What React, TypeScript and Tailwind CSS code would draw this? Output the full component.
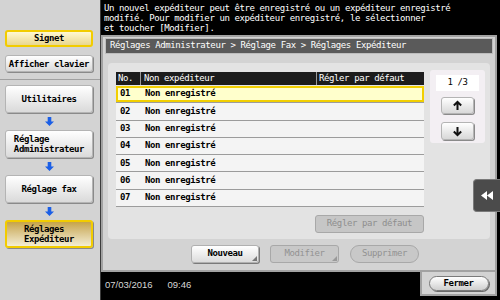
import React from 'react';

const mono = "font-['DejaVu_Sans_Mono','Liberation_Mono',monospace] font-bold text-[9px] tracking-[-0.4px]";

const rows = ['01', '02', '03', '04', '05', '06', '07'];

const BlueArrow = () => (
  <div className="h-[17px] flex items-center justify-center">
    <svg width="9" height="9" viewBox="0 0 10 10">
      <path d="M3 0h4v5h3l-5 5-5-5h3z" fill="#1b5fe6" />
    </svg>
  </div>
);

const SideButton = ({ children, tall = false }: { children: React.ReactNode; tall?: boolean }) => (
  <button
    className={`w-[88px] ${tall ? 'h-[28px]' : 'h-[17px]'} rounded-[3px] border border-[#b4b4b4] bg-gradient-to-b from-white to-[#dadada] shadow-[1px_1px_0_#8a8a8a] text-black flex items-center justify-center leading-[10px]`}
  >
    {children}
  </button>
);

const Arrow = ({ up }: { up?: boolean }) => (
  <svg width="11" height="11" viewBox="0 0 12 12">
    {up ? (
      <path d="M6 11V2M2 6l4-4 4 4" stroke="#111" strokeWidth="2.2" fill="none" />
    ) : (
      <path d="M6 1v9M2 6l4 4 4-4" stroke="#111" strokeWidth="2.2" fill="none" />
    )}
  </svg>
);

const Corner = ({ color }: { color: string }) => (
  <span
    className={`absolute right-[1px] bottom-[1px] w-0 h-0 border-l-[5px] border-l-transparent border-b-[5px] ${color}`}
  />
);

export default function App() {
  return (
    <div className={`relative w-[500px] h-[300px] flex bg-black overflow-hidden ${mono}`}>
      {/* sidebar */}
      <aside className="w-[101px] h-full bg-[#d3d3d3] border-r border-[#3c3c3c] flex flex-col">
        <div className="h-[80px] border-b border-[#a0a0a0] pt-[30px] pl-[5px] flex flex-col gap-[8px]">
          <button className="w-[88px] h-[17px] rounded-[3px] border-2 border-[#f2cc00] bg-gradient-to-b from-[#fff8d2] to-[#e9d78f] text-black flex items-center justify-center">
            Signet
          </button>
          <SideButton>Afficher clavier</SideButton>
        </div>
        <div className="pt-[5px] pl-[5px] flex flex-col">
          <SideButton tall>Utilitaires</SideButton>
          <div className="w-[88px]">
            <BlueArrow />
          </div>
          <SideButton tall>
            <span className="inline-block text-left">
              Réglage
              <br />
              Administrateur
            </span>
          </SideButton>
          <div className="w-[88px]">
            <BlueArrow />
          </div>
          <SideButton tall>Réglage fax</SideButton>
          <div className="w-[88px]">
            <BlueArrow />
          </div>
          <button className="w-[88px] h-[28px] rounded-[3px] border-2 border-[#f2cc00] bg-gradient-to-b from-[#c6a448] to-[#f3edd4] text-black flex items-center justify-center leading-[10px] shadow-[1px_1px_0_#8a8a8a]">
            <span className="inline-block text-left">
              Réglages
              <br />
              Expéditeur
            </span>
          </button>
        </div>
      </aside>

      {/* main */}
      <main className="flex-1 flex flex-col">
        <div className="h-[35px] pl-[3px] pt-[3px] text-white leading-[10px] font-normal">
          Un nouvel expéditeur peut être enregistré ou un expéditeur enregistré
          <br />
          modifié. Pour modifier un expéditeur enregistré, le sélectionner
          <br />
          et toucher [Modifier].
        </div>

        <section className="h-[237px] mr-[3px] bg-[#d3d3d3] border-2 border-[#a2a2a2] pt-[1px] flex flex-col">
          <div className="mx-[2px] h-[16px] bg-[#5a5a5a] border border-[#bdbdbd] text-white font-normal pl-[4px] flex items-center">
            Réglages Administrateur &gt; Réglage Fax &gt; Réglages Expéditeur
          </div>

          <div className="mt-[9px] mx-[5px] h-[176px] bg-[#e3e3e3] rounded-[4px] flex pl-[8px] pt-[9px]">
            <div className="w-[308px] flex flex-col">
              <div className="h-[13px] bg-[#1c1c1c] text-white font-normal flex items-center">
                <span className="w-[25px] pl-[2px] border-r border-[#9a9a9a]">No.</span>
                <span className="w-[176px] pl-[3px] border-r border-[#9a9a9a]">Non expéditeur</span>
                <span className="flex-1 pl-[2px]">Régler par défaut</span>
              </div>
              <div className="mt-[1px] flex flex-col gap-[1px] bg-[#9c9c9c] pb-[1px]">
                {rows.map((n, i) => (
                  <div
                    key={n}
                    className={`h-[16.3px] flex items-center text-black ${
                      i === 0 ? 'bg-[#ffffcc] shadow-[inset_0_0_0_2px_#f2cf00]' : 'bg-[#f4f4f4]'
                    }`}
                  >
                    <span className="w-[26px] pl-[4px]">{n}</span>
                    <span className="pl-[3px]">Non enregistré</span>
                  </div>
                ))}
              </div>
              <div className="mt-[8px] flex justify-end">
                <button className="w-[109px] h-[18px] rounded-[3px] bg-[#c6c6c6] border border-[#a8a8a8] text-[#8e8e8e] font-normal">
                  Régler par défaut
                </button>
              </div>
            </div>

            <div className="ml-[6px] mt-[-2px] w-[55px] h-[73px] bg-[#f3eff3] rounded-[3px] flex flex-col items-center">
              <div className="mt-[5px] w-[43px] h-[16px] bg-white flex items-center justify-center text-black font-normal">
                1 /3
              </div>
              <button className="mt-[6px] w-[33px] h-[17px] rounded-[3px] border border-[#b4b4b4] bg-gradient-to-b from-white to-[#d8d8d8] shadow-[1px_1px_0_#8a8a8a] flex items-center justify-center">
                <Arrow up />
              </button>
              <button className="mt-[8px] w-[33px] h-[18px] rounded-[3px] border border-[#b4b4b4] bg-gradient-to-b from-white to-[#d8d8d8] shadow-[1px_1px_0_#8a8a8a] flex items-center justify-center">
                <Arrow />
              </button>
            </div>
          </div>

          <div className="mt-[6px] pl-[88px] flex gap-[11px]">
            <button className="relative w-[68px] h-[18px] rounded-[3px] border border-[#b0b0b0] bg-gradient-to-b from-white to-[#dcdcdc] shadow-[1px_1px_0_#7a7a7a] text-black">
              Nouveau
              <Corner color="border-b-[#777]" />
            </button>
            <button className="relative w-[69px] h-[18px] rounded-[3px] border border-[#a8a8a8] bg-[#c8c8c8] text-[#929292] font-normal">
              Modifier
              <Corner color="border-b-[#999]" />
            </button>
            <button className="w-[69px] h-[18px] rounded-full border border-[#a8a8a8] bg-[#c8c8c8] text-[#929292] font-normal">
              Supprimer
            </button>
          </div>
        </section>

        <div className="flex-1 flex">
          <div className="flex-1 pl-[4px] pt-[6px] font-['Liberation_Sans',Arial,sans-serif] font-normal text-[9.5px] tracking-normal text-[#d6d6d6] flex gap-[15px]">
            <span>07/03/2016</span>
            <span>09:46</span>
          </div>
          <div className="w-[77px] h-[24px] mr-[3px] bg-[#d3d3d3] border-2 border-t-0 border-[#a2a2a2] flex items-center justify-center">
            <button className="w-[60px] h-[15px] rounded-full border border-[#7a7a7a] bg-gradient-to-b from-white to-[#cfcfcf] shadow-[1px_1px_0_#6a6a6a] text-black">
              Fermer
            </button>
          </div>
        </div>
      </main>

      {/* collapse tab */}
      <div className="absolute left-[473px] top-[179px] w-[27px] h-[33px] bg-[#4b4b4b] border border-[#7a7a7a] border-r-0 rounded-l-[4px] flex items-center justify-center">
        <svg width="12" height="9" viewBox="0 0 12 9">
          <path d="M0 4.5L6 0v9z M6 4.5L12 0v9z" fill="#fff" />
        </svg>
      </div>
    </div>
  );
}
